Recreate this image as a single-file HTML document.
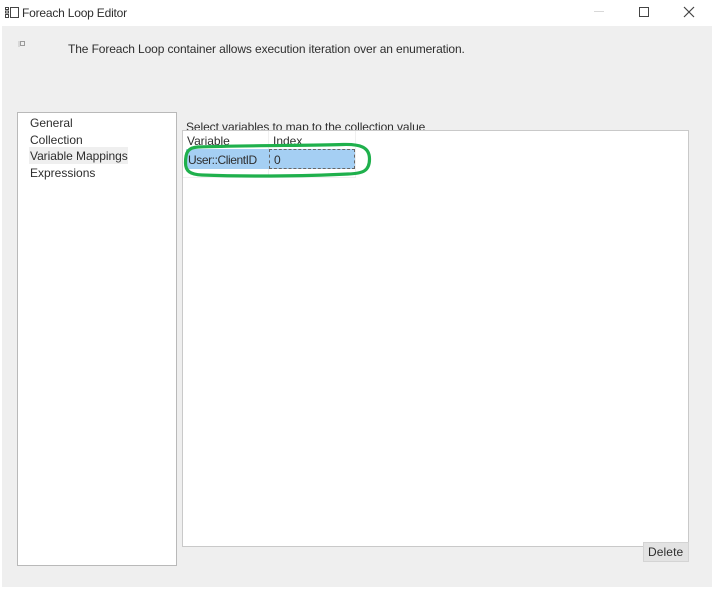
<!DOCTYPE html>
<html>
<head>
<meta charset="utf-8">
<style>
html,body{margin:0;padding:0;background:#fff;}
body{width:712px;height:589px;position:relative;overflow:hidden;font-family:"Liberation Sans",sans-serif;font-size:12px;color:#2e2e2e;}
div,svg{position:absolute;box-sizing:border-box;}
.t{white-space:nowrap;line-height:16px;filter:blur(.3px);}
</style>
</head>
<body>
<div style="left:2px;top:26px;width:710px;height:561px;background:#efefef;"></div>

<svg style="left:5px;top:6px;" width="14" height="13" viewBox="0 0 14 13" fill="none" stroke="#444" stroke-width="1"><rect x="5.500" y="1.500" width="8" height="10"/><path d="M.5 1.500h3v2h-3zM.5 5h3v2h-3zM.5 8.500h3v3h-3z"/></svg>
<div class="t" style="left:22px;top:5px;letter-spacing:-.2px;">Foreach Loop Editor</div>

<div style="left:594px;top:11px;width:10px;height:1px;background:#d8d8d8;"></div>
<div style="left:639px;top:7px;width:10px;height:10px;border:1.500px solid #444;"></div>
<svg style="left:683px;top:6px;" width="12" height="12" viewBox="0 0 12 12" fill="none" stroke="#444" stroke-width="1.200"><path d="M1 1l10 10M11 1L1 11"/></svg>

<svg style="left:18px;top:41px;" width="7" height="6" viewBox="0 0 7 6" fill="none" stroke="#777" stroke-width=".7"><rect x="2.500" y=".5" width="4" height="4"/><path d="M.5 1h1M.5 3h1M.5 5h1"/></svg>
<div class="t" style="left:68px;top:41px;letter-spacing:-.11px;">The Foreach Loop container allows execution iteration over an enumeration.</div>

<div style="left:17px;top:112px;width:160px;height:454px;background:#fff;border:1px solid #b9b9b9;border-bottom-width:1.500px;"></div>
<div style="left:29px;top:147px;width:99px;height:17px;background:#efefef;"></div>
<div class="t" style="left:30px;top:115px;">General</div>
<div class="t" style="left:30px;top:132px;">Collection</div>
<div class="t" style="left:30px;top:148px;letter-spacing:-.05px;">Variable Mappings</div>
<div class="t" style="left:30px;top:165px;">Expressions</div>

<div class="t" style="left:186px;top:119px;height:11px;overflow:hidden;letter-spacing:-.09px;">Select variables to map to the collection value</div>

<div style="left:182px;top:130px;width:507px;height:417px;background:#fff;border:1px solid #c9c9c9;"></div>
<div style="left:268px;top:131px;width:1px;height:47px;background:#f0f0f0;"></div>
<div style="left:355px;top:131px;width:1px;height:47px;background:#f0f0f0;"></div>
<div style="left:183px;top:177px;width:173px;height:1px;background:#f0f0f0;"></div>
<div class="t" style="left:187px;top:133px;letter-spacing:-.05px;">Variable</div>
<div class="t" style="left:273px;top:133px;">Index</div>

<div style="left:186px;top:149px;width:83px;height:20px;background:#a5cff3;"></div>
<div style="left:269px;top:149px;width:86px;height:20px;background:#a5cff3;border:1px dashed #666;"></div>
<div class="t" style="left:188px;top:152px;letter-spacing:-.42px;">User::ClientID</div>
<div class="t" style="left:274px;top:152px;">0</div>

<svg style="left:180px;top:140px;" width="196" height="40" viewBox="0 0 196 40" fill="none"><path d="M18 7C60 5.500 130 5.500 163 4.500C180 4 189.500 7 189.500 19C189.500 31 183 33.500 168 34C120 36.500 60 36.500 22 35C10 34.500 5.500 31 5.500 23C5.500 12 8 7.500 18 7Z" stroke="#1fb04c" stroke-width="3.200"/></svg>

<div style="left:643px;top:542px;width:46px;height:20px;background:#e3e3e3;border:1px solid #d4d4d4;"></div>
<div class="t" style="left:648px;top:544px;letter-spacing:.1px;">Delete</div>
</body>
</html>
